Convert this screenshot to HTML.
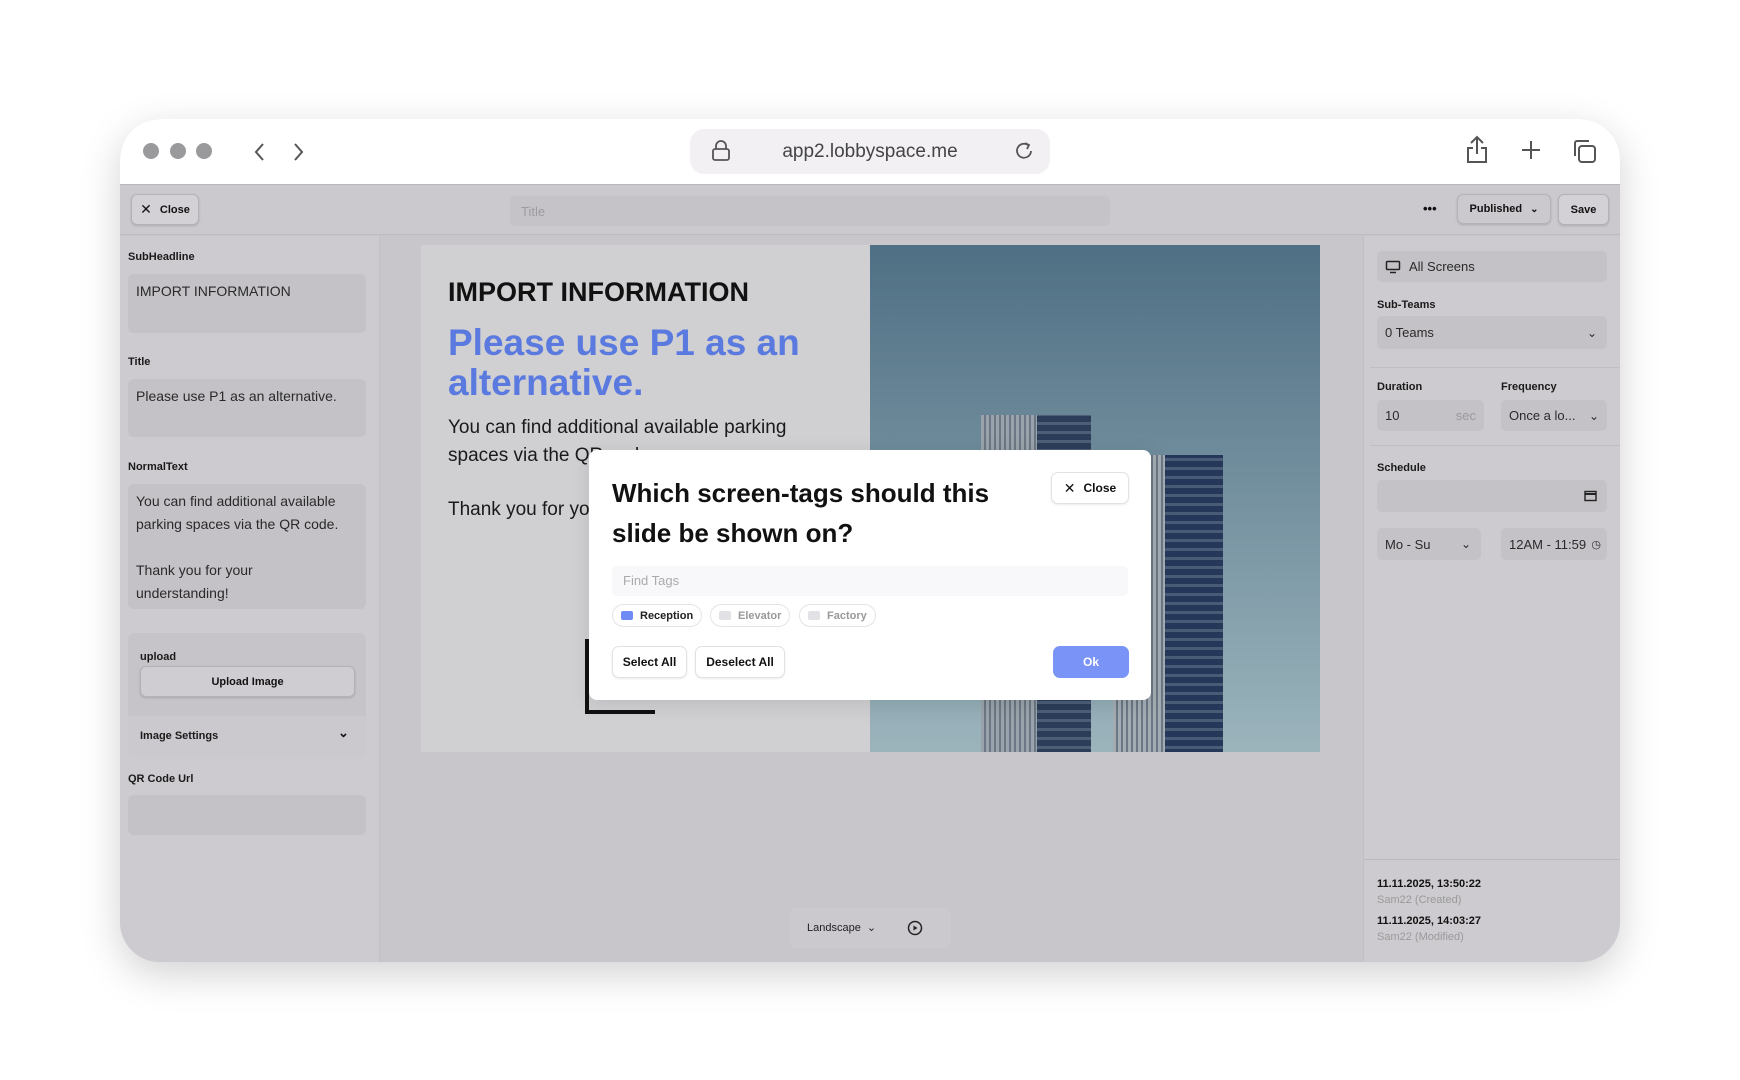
<!DOCTYPE html>
<html><head><meta charset="utf-8"><style>
*{box-sizing:border-box;margin:0;padding:0}
body{width:1740px;height:1080px;background:#fff;font-family:"Liberation Sans",sans-serif;position:relative;overflow:hidden;color:#111}
.a{position:absolute}
.win{left:120px;top:119px;width:1500px;height:843px;border-radius:40px;overflow:hidden;box-shadow:0 12px 40px rgba(0,0,0,.18);background:#c8c6ca}
.tb{left:0;top:0;width:1500px;height:66px;background:#fff;border-bottom:1px solid #b9b7bb}
.dot{width:16px;height:16px;border-radius:50%;background:#9a999c;top:24px}
.lbl{font-size:11px;font-weight:bold;color:#1a1a1a}
.box{background:#c4c2c6;border-radius:6px}
.btn{background:#d3d1d5;border:1px solid #b4b2b6;border-radius:6px;font-size:11px;font-weight:bold;display:flex;align-items:center;justify-content:center;box-shadow:0 1px 2px rgba(0,0,0,.15)}
.in{font-size:14px;color:#2a2a2a;line-height:23px}
.mb{background:#fff;border:1px solid #e2e1e5;border-radius:7px;font-size:12px;font-weight:bold;display:flex;align-items:center;justify-content:center;box-shadow:0 1px 2px rgba(0,0,0,.08)}
.chip{border:1px solid #e4e3e7;border-radius:13px;font-size:11px;font-weight:bold;display:flex;align-items:center;padding-left:8px;gap:7px;height:23px;top:485px}
.chip i{display:inline-block;width:12px;height:9px;border-radius:2px;background:#e2e1e5}
.rl{font-size:11px;font-weight:bold;color:#1a1a1a}
.sel{background:#c4c2c6;border-radius:5px;font-size:13px;color:#2a2a2a;display:flex;align-items:center;padding-left:8px}
</style></head><body>
<div class="a win">
 <div class="a tb">
  <div class="a dot" style="left:23px"></div><div class="a dot" style="left:50px"></div><div class="a dot" style="left:76px"></div>
  <svg class="a" style="left:132px;top:22px" width="16" height="22" viewBox="0 0 16 22"><path d="M11 3 L4 11 L11 19" stroke="#555" stroke-width="2" fill="none"/></svg>
  <svg class="a" style="left:170px;top:22px" width="16" height="22" viewBox="0 0 16 22"><path d="M5 3 L12 11 L5 19" stroke="#555" stroke-width="2" fill="none"/></svg>
  <div class="a" style="left:570px;top:10px;width:360px;height:45px;background:#f2f0f3;border-radius:14px"></div>
  <svg class="a" style="left:590px;top:20px" width="22" height="24" viewBox="0 0 22 24"><rect x="3" y="10" width="16" height="11" rx="2" stroke="#555" stroke-width="1.8" fill="none"/><path d="M6 10 V7 a5 5 0 0 1 10 0 V10" stroke="#555" stroke-width="1.8" fill="none"/></svg>
  <div class="a" style="left:570px;width:360px;top:22px;text-align:center;font-size:19px;color:#444">app2.lobbyspace.me</div>
  <svg class="a" style="left:893px;top:21px" width="22" height="22" viewBox="0 0 22 22"><path d="M18 11 A7 7 0 1 1 15 5" stroke="#555" stroke-width="1.8" fill="none"/><path d="M12 3 L16 5 L14 9" stroke="#555" stroke-width="1.8" fill="none"/></svg>
  <svg class="a" style="left:1345px;top:16px" width="24" height="30" viewBox="0 0 24 30"><path d="M12 2 V19 M6 8 L12 2 L18 8" stroke="#555" stroke-width="2" fill="none"/><path d="M8 13 H3 V27 H21 V13 H16" stroke="#555" stroke-width="2" fill="none"/></svg>
  <svg class="a" style="left:1400px;top:20px" width="22" height="22" viewBox="0 0 22 22"><path d="M11 2 V20 M2 11 H20" stroke="#555" stroke-width="2"/></svg>
  <svg class="a" style="left:1451px;top:19px" width="26" height="26" viewBox="0 0 26 26"><rect x="8" y="8" width="16" height="16" rx="3" stroke="#555" stroke-width="2" fill="none"/><path d="M4 18 V5 a2 2 0 0 1 2-2 H18" stroke="#555" stroke-width="2" fill="none"/></svg>
 </div>
 <div class="a" style="left:0;top:66px;width:1500px;height:50px;background:#cbc9cd;border-bottom:1px solid #bdbbbf"></div>
 <div class="a btn" style="left:11px;top:75px;width:68px;height:31px;gap:8px"><span style="font-size:14px;font-weight:normal">✕</span>Close</div>
 <div class="a" style="left:390px;top:77px;width:600px;height:30px;background:#c5c3c7;border-radius:5px;font-size:13px;color:#9d9ba0;padding:8px 11px">Title</div>
 <div class="a" style="left:1303px;top:82px;font-size:13px;font-weight:bold">•••</div>
 <div class="a btn" style="left:1337px;top:75px;width:94px;height:30px;background:#cbc9cd;gap:8px">Published <span style="font-size:10px">⌄</span></div>
 <div class="a btn" style="left:1438px;top:75px;width:51px;height:31px">Save</div>
 <div class="a" style="left:0;top:117px;width:260px;height:726px;background:#cdcbcf;border-right:1px solid #c2c0c4"></div>
 <div class="a lbl" style="left:8px;top:132px">SubHeadline</div>
 <div class="a box in" style="left:8px;top:155px;width:238px;height:59px;padding:6px 8px">IMPORT INFORMATION</div>
 <div class="a lbl" style="left:8px;top:237px">Title</div>
 <div class="a box in" style="left:8px;top:260px;width:238px;height:58px;padding:6px 8px">Please use P1 as an alternative.</div>
 <div class="a lbl" style="left:8px;top:342px">NormalText</div>
 <div class="a box in" style="left:8px;top:365px;width:238px;height:125px;padding:6px 8px;white-space:nowrap">You can find additional available<br>parking spaces via the QR code.<br><br>Thank you for your<br>understanding!</div>
 <div class="a box" style="left:8px;top:514px;width:238px;height:124px;background:#c6c4c8"></div>
 <div class="a lbl" style="left:20px;top:532px">upload</div>
 <div class="a btn" style="left:20px;top:547px;width:215px;height:31px;background:#cfcdd1">Upload Image</div>
 <div class="a" style="left:8px;top:597px;width:238px;height:41px;background:#cbc9cd;border-radius:0 0 6px 6px"></div>
 <div class="a lbl" style="left:20px;top:611px">Image Settings</div>
 <div class="a" style="left:218px;top:606px;font-size:13px;font-weight:bold">⌄</div>
 <div class="a lbl" style="left:8px;top:654px">QR Code Url</div>
 <div class="a box" style="left:8px;top:676px;width:238px;height:40px"></div>
 <div class="a" style="left:301px;top:126px;width:450px;height:507px;background:#d0cfd2"></div>
 <div class="a" style="left:750px;top:126px;width:450px;height:507px;background:linear-gradient(#4f6f84,#9bb4bc);overflow:hidden">
  <div class="a" style="left:111px;top:170px;width:57px;height:340px;background:repeating-linear-gradient(90deg,#9aa3ab 0 3px,#6b7784 3px 5px)"></div>
  <div class="a" style="left:167px;top:170px;width:54px;height:340px;background:repeating-linear-gradient(0deg,#2c3d5a 0 6px,#4d5e77 6px 9px)"></div>
  <div class="a" style="left:243px;top:210px;width:53px;height:300px;background:repeating-linear-gradient(90deg,#a3acb3 0 3px,#6b7784 3px 5px)"></div>
  <div class="a" style="left:295px;top:210px;width:58px;height:300px;background:repeating-linear-gradient(0deg,#26385a 0 6px,#4a5b76 6px 9px)"></div>
 </div>
 <div class="a" style="left:328px;top:158px;font-size:27px;font-weight:bold;color:#111">IMPORT INFORMATION</div>
 <div class="a" style="left:328px;top:204px;font-size:37px;font-weight:bold;color:#5a7ae0;line-height:40px;width:400px">Please use P1 as an alternative.</div>
 <div class="a" style="left:328px;top:295px;font-size:19px;line-height:28px;color:#1a1a1a;width:370px">You can find additional available parking spaces via the QR code.</div>
 <div class="a" style="left:328px;top:380px;font-size:19px;color:#1a1a1a">Thank you for your understanding!</div>
 <div class="a" style="left:465px;top:520px;width:70px;height:75px;border-left:4px solid #111;border-bottom:4px solid #111"></div>
 <div class="a" style="left:469px;top:331px;width:562px;height:250px;background:#fff;border-radius:8px;box-shadow:0 4px 20px rgba(0,0,0,.1)"></div>
 <div class="a" style="left:492px;top:354px;font-size:26px;font-weight:bold;line-height:40px;width:400px;color:#111">Which screen-tags should this slide be shown on?</div>
 <div class="a mb" style="left:931px;top:353px;width:78px;height:32px;gap:8px"><span style="font-size:14px;font-weight:normal">✕</span>Close</div>
 <div class="a" style="left:492px;top:447px;width:516px;height:30px;background:#f8f7fa;border-radius:5px;font-size:13px;color:#aaa;padding:7px 11px">Find Tags</div>
 <div class="a chip" style="left:492px;width:90px;color:#222"><i style="background:#6f8cf5"></i>Reception</div>
 <div class="a chip" style="left:590px;width:80px;color:#999"><i></i>Elevator</div>
 <div class="a chip" style="left:679px;width:77px;color:#999"><i></i>Factory</div>
 <div class="a mb" style="left:492px;top:527px;width:75px;height:32px">Select All</div>
 <div class="a mb" style="left:575px;top:527px;width:90px;height:32px">Deselect All</div>
 <div class="a" style="left:933px;top:527px;width:76px;height:32px;background:#7a93f7;border-radius:7px;color:#fff;font-size:12px;font-weight:bold;display:flex;align-items:center;justify-content:center">Ok</div>
 <div class="a" style="left:669px;top:789px;width:162px;height:40px;background:#cbc9cd;border-radius:7px"></div>
 <div class="a" style="left:687px;top:802px;font-size:11px;color:#222">Landscape &nbsp;⌄</div>
 <svg class="a" style="left:787px;top:801px" width="16" height="16" viewBox="0 0 16 16"><circle cx="8" cy="8" r="6.5" stroke="#222" stroke-width="1.5" fill="none"/><path d="M6.5 5.5 L10.5 8 L6.5 10.5Z" fill="#222"/></svg>
 <div class="a" style="left:1243px;top:117px;width:257px;height:726px;background:#cdcbcf;border-left:1px solid #c2c0c4"></div>
 <div class="a sel" style="left:1257px;top:132px;width:230px;height:31px;gap:8px"><svg width="16" height="14" viewBox="0 0 16 14"><rect x="1.5" y="1.5" width="13" height="8" rx="1" stroke="#222" stroke-width="1.5" fill="none"/><path d="M5 12.5 H11" stroke="#222" stroke-width="1.5"/></svg>All Screens</div>
 <div class="a rl" style="left:1257px;top:180px">Sub-Teams</div>
 <div class="a sel" style="left:1257px;top:197px;width:230px;height:33px">0 Teams<span style="position:absolute;right:10px;font-size:12px">⌄</span></div>
 <div class="a" style="left:1250px;top:248px;width:250px;height:1px;background:#c0bec2"></div>
 <div class="a rl" style="left:1257px;top:262px">Duration</div>
 <div class="a rl" style="left:1381px;top:262px">Frequency</div>
 <div class="a sel" style="left:1257px;top:281px;width:107px;height:31px">10<span style="position:absolute;right:8px;color:#999">sec</span></div>
 <div class="a sel" style="left:1381px;top:281px;width:106px;height:31px">Once a lo...<span style="position:absolute;right:8px;font-size:12px">⌄</span></div>
 <div class="a" style="left:1250px;top:326px;width:250px;height:1px;background:#c0bec2"></div>
 <div class="a rl" style="left:1257px;top:343px">Schedule</div>
 <div class="a sel" style="left:1257px;top:361px;width:230px;height:32px"><svg style="position:absolute;right:10px" width="13" height="12" viewBox="0 0 13 12"><rect x="1" y="1.5" width="11" height="9" stroke="#222" stroke-width="1.4" fill="none"/><path d="M1 4 H12" stroke="#222" stroke-width="2"/></svg></div>
 <div class="a sel" style="left:1257px;top:409px;width:104px;height:32px">Mo - Su<span style="position:absolute;right:10px;font-size:12px">⌄</span></div>
 <div class="a sel" style="left:1381px;top:409px;width:106px;height:32px">12AM - 11:59<span style="position:absolute;right:6px;font-size:11px">◷</span></div>
 <div class="a" style="left:1243px;top:740px;width:257px;height:1px;background:#bcbabe"></div>
 <div class="a" style="left:1257px;top:757px;font-size:11px;font-weight:bold;line-height:16px">11.11.2025, 13:50:22<br><span style="font-weight:normal;color:#999">Sam22 (Created)</span></div>
 <div class="a" style="left:1257px;top:794px;font-size:11px;font-weight:bold;line-height:16px">11.11.2025, 14:03:27<br><span style="font-weight:normal;color:#999">Sam22 (Modified)</span></div>
</div>
</body></html>
